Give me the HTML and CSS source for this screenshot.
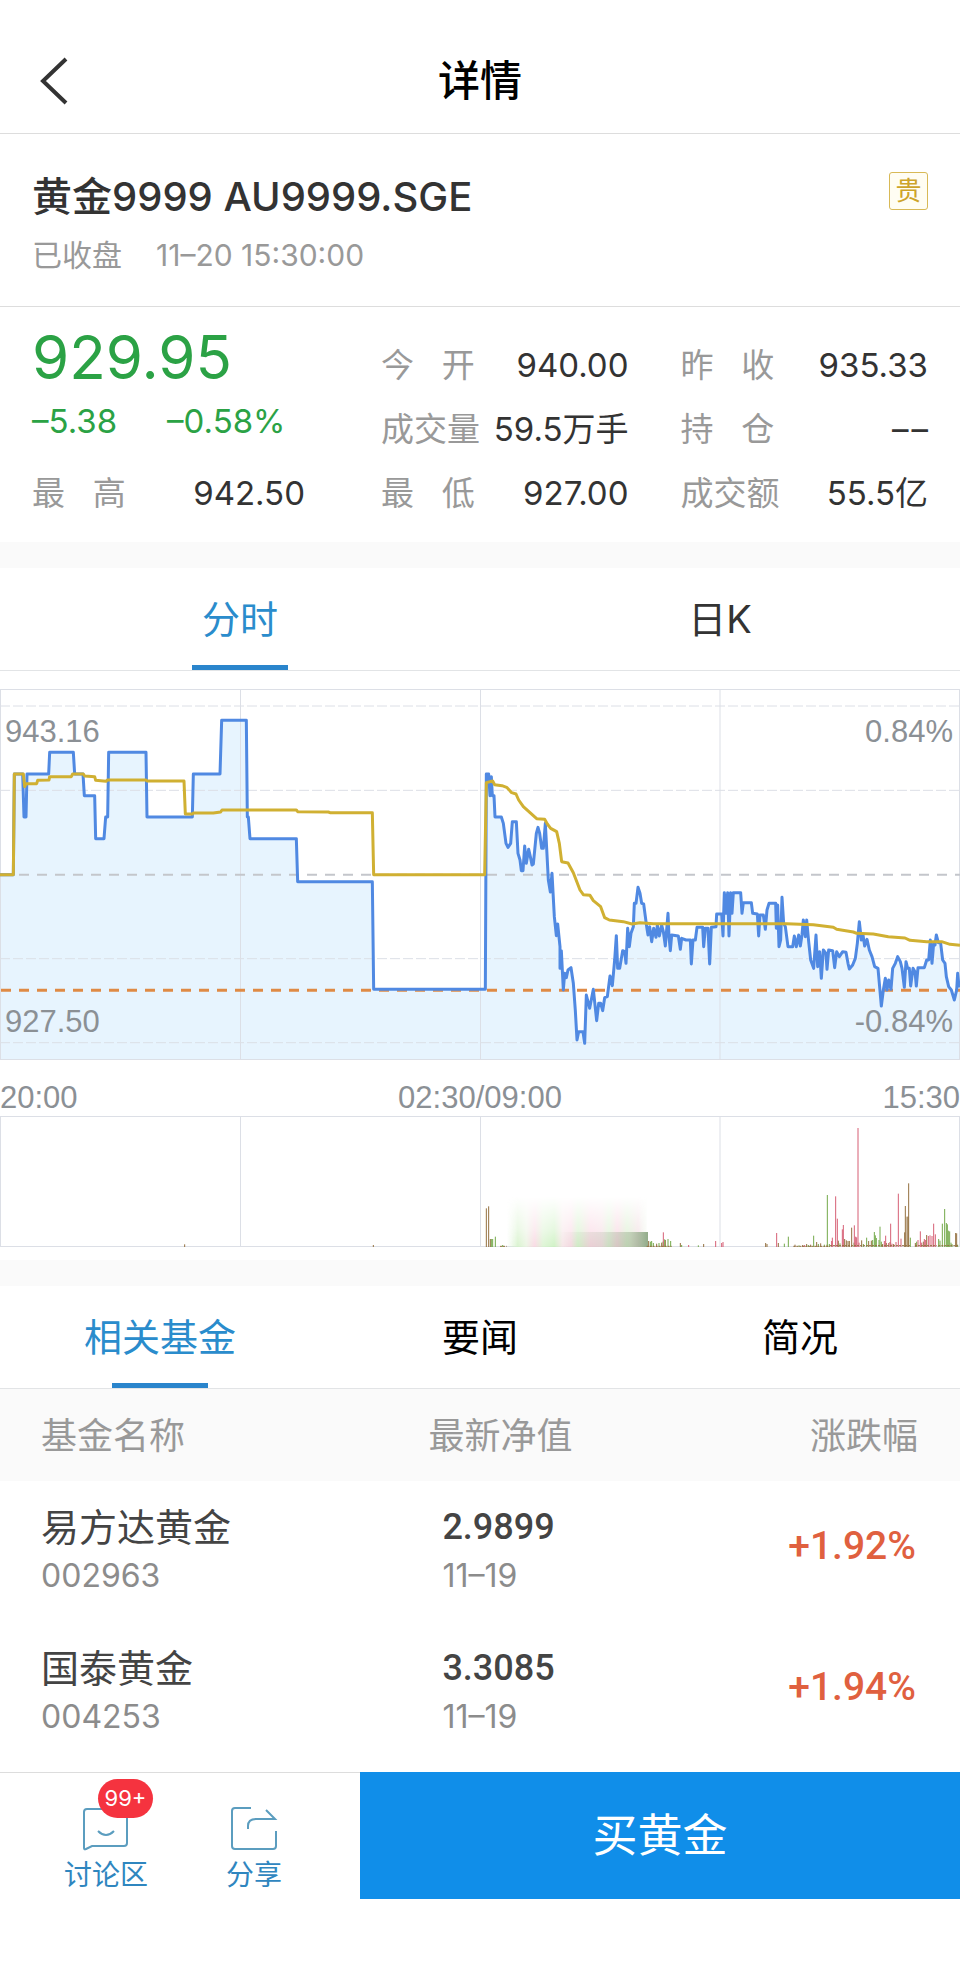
FILE: index.html
```html
<!DOCTYPE html>
<html lang="zh-CN">
<head>
    <meta charset="utf-8">
    <meta name="viewport" content="width=device-width, initial-scale=1">
    <title>详情</title>
    <link rel="stylesheet" href="styles.css">
</head>
<body>
    <header class="navbar">
        <button class="back" type="button" aria-label="返回">
            <svg width="28" height="48" viewBox="0 0 28 48"><path d="M26 2L3 24L26 46"/></svg>
        </button>
        <h1>详情</h1>
    </header>

    <section class="quote-head">
        <div>
            <h2>黄金9999 AU9999.SGE</h2>
            <p class="status"><span>已收盘</span><span>11–20 15:30:00</span></p>
        </div>
        <span class="tag">贵</span>
    </section>

    <section class="stats">
        <div class="col">
            <div class="price">929.95</div>
            <div class="change"><span>–5.38</span><span>–0.58%</span></div>
            <dl class="stat"><dt>最&nbsp;&nbsp;&nbsp;高</dt><dd>942.50</dd></dl>
        </div>
        <div class="col">
            <dl class="stat"><dt>今&nbsp;&nbsp;&nbsp;开</dt><dd>940.00</dd></dl>
            <dl class="stat"><dt>成交量</dt><dd>59.5万手</dd></dl>
            <dl class="stat"><dt>最&nbsp;&nbsp;&nbsp;低</dt><dd>927.00</dd></dl>
        </div>
        <div class="col">
            <dl class="stat"><dt>昨&nbsp;&nbsp;&nbsp;收</dt><dd>935.33</dd></dl>
            <dl class="stat"><dt>持&nbsp;&nbsp;&nbsp;仓</dt><dd>–&hairsp;–</dd></dl>
            <dl class="stat"><dt>成交额</dt><dd>55.5亿</dd></dl>
        </div>
    </section>

    <nav class="tabs chart-tabs">
        <button class="tab active" type="button">分时</button>
        <button class="tab" type="button">日K</button>
    </nav>

    <section class="chart">
        <div class="plot">
            <svg class="price-chart" viewBox="0 27 2880 1113" preserveAspectRatio="none">
                <!-- night session -->
                <path class="area" d="M0 1140V584H40L43 282H68L72 411H78L81 282H146L149 217H220L224 282H249L253 347H284L287 476H312L317 411H323L326 217H438L441 411H577L580 282H660L665 121H739L742 411H745L750 476H889L893 605H1117L1121 928H1440V1140Z"/>
                <!-- day session -->
                <path class="area" transform="translate(1440 0)" d="M0 1140V928H16L19 282 26 282 30 347 34 290 37 347 42 347 45 411 64 411 70 430 78 490 84 502 92 490 97 425 109 425 114 520 120 540 124 572 129 572 134 498 139 550 146 508 151 530 156 555 160 552 169 460 174 442 179 460 185 505 190 505 196 430 200 505 205 600 211 636 216 580 223 710 229 767 233 732 240 800 240 865 244 812 250 930 254 880 259 893 264 870 273 863 280 910 286 992 291 1080 296 1055 309 1055 314 1090 319 945 329 985 340 928 350 1022 356 970 362 970 368 992 374 953 382 950 390 888 397 917 404 840 409 767 413 865 419 865 428 812 434 815 438 850 443 745 448 800 453 760 460 740 463 670 468 670 474 622 480 640 485 670 491 672 500 740 504 765 509 740 515 785 521 745 528 772 532 735 538 768 545 735 550 755 556 798 564 700 567 770 571 812 575 765 595 768 601 808 605 775 618 780 631 780 634 852 639 780 646 780 651 742 668 742 671 800 676 745 684 745 689 852 694 742 708 740 710 702 725 702 729 768 733 638 738 700 743 638 747 768 752 638 756 700 760 638 782 638 786 700 790 668 814 668 818 700 832 702 836 768 840 705 850 705 856 748 861 690 867 670 887 670 889 745 893 675 897 800 902 780 906 652 911 730 916 740 924 800 938 800 943 768 949 800 956 765 961 798 966 765 970 720 976 770 980 720 986 785 992 840 1001 865 1008 765 1013 860 1019 815 1024 895 1030 810 1038 820 1041 868 1046 810 1058 812 1064 863 1070 815 1078 830 1088 815 1098 817 1104 850 1108 867 1118 855 1126 835 1132 790 1138 725 1144 780 1149 765 1154 798 1161 778 1168 810 1176 830 1184 860 1194 865 1198 910 1204 978 1210 930 1216 895 1221 930 1226 900 1233 928 1238 865 1246 850 1253 830 1261 845 1266 865 1273 922 1278 845 1283 865 1288 865 1292 918 1299 865 1305 875 1309 918 1314 863 1333 863 1340 840 1346 840 1351 780 1356 850 1361 790 1365 795 1369 765 1375 788 1382 790 1388 840 1395 850 1399 890 1406 920 1414 930 1423 960 1430 930 1433 880 1436 910 1440 922V1140Z"/>

                <path class="grid" d="M1.5 28V1138M721.5 28V1138M1441.5 28V1138M2160 28V1138M2878.5 28V1138M0 28.5H2880M0 1138.5H2880"/>
                <path class="grid dashed" d="M0 78H2880M0 331H2880M0 836H2880M0 1088H2880"/>
                <path class="prev-close" d="M3 584H2880"/>
                <path class="last" d="M3 931H2880"/>

                <path class="line" d="M0 584H40L43 282H68L72 411H78L81 282H146L149 217H220L224 282H249L253 347H284L287 476H312L317 411H323L326 217H438L441 411H577L580 282H660L665 121H739L742 411H745L750 476H889L893 605H1117L1121 928H1440"/>
                <path class="line" transform="translate(1440 0)" d="M0 928H16L19 282 26 282 30 347 34 290 37 347 42 347 45 411 64 411 70 430 78 490 84 502 92 490 97 425 109 425 114 520 120 540 124 572 129 572 134 498 139 550 146 508 151 530 156 555 160 552 169 460 174 442 179 460 185 505 190 505 196 430 200 505 205 600 211 636 216 580 223 710 229 767 233 732 240 800 240 865 244 812 250 930 254 880 259 893 264 870 273 863 280 910 286 992 291 1080 296 1055 309 1055 314 1090 319 945 329 985 340 928 350 1022 356 970 362 970 368 992 374 953 382 950 390 888 397 917 404 840 409 767 413 865 419 865 428 812 434 815 438 850 443 745 448 800 453 760 460 740 463 670 468 670 474 622 480 640 485 670 491 672 500 740 504 765 509 740 515 785 521 745 528 772 532 735 538 768 545 735 550 755 556 798 564 700 567 770 571 812 575 765 595 768 601 808 605 775 618 780 631 780 634 852 639 780 646 780 651 742 668 742 671 800 676 745 684 745 689 852 694 742 708 740 710 702 725 702 729 768 733 638 738 700 743 638 747 768 752 638 756 700 760 638 782 638 786 700 790 668 814 668 818 700 832 702 836 768 840 705 850 705 856 748 861 690 867 670 887 670 889 745 893 675 897 800 902 780 906 652 911 730 916 740 924 800 938 800 943 768 949 800 956 765 961 798 966 765 970 720 976 770 980 720 986 785 992 840 1001 865 1008 765 1013 860 1019 815 1024 895 1030 810 1038 820 1041 868 1046 810 1058 812 1064 863 1070 815 1078 830 1088 815 1098 817 1104 850 1108 867 1118 855 1126 835 1132 790 1138 725 1144 780 1149 765 1154 798 1161 778 1168 810 1176 830 1184 860 1194 865 1198 910 1204 978 1210 930 1216 895 1221 930 1226 900 1233 928 1238 865 1246 850 1253 830 1261 845 1266 865 1273 922 1278 845 1283 865 1288 865 1292 918 1299 865 1305 875 1309 918 1314 863 1333 863 1340 840 1346 840 1351 780 1356 850 1361 790 1365 795 1369 765 1375 788 1382 790 1388 840 1395 850 1399 890 1406 920 1414 930 1423 960 1430 930 1433 880 1436 910 1440 922"/>

                <!-- average price -->
                <path class="average" d="M0 584H40L43 282H70L74 320 78 311H110L113 301 147 300 149 290H214L218 282H250L254 288 284 290 287 301 318 304 322 300H438L441 303H552L556 402H577L581 399H640L662 396 666 390H889L893 395 985 396 990 398H1117L1121 584H1440"/>
                <path class="average" transform="translate(1440 0)" d="M0 584H14L19 308 38 303 44 314 66 317 80 322 95 338 108 342 116 360 130 380 150 398 170 416 194 418 202 432 212 445 230 455 238 490 245 545 264 549 280 578 300 630 310 644 330 646 340 662 362 680 374 713 388 720 430 725 456 732 480 728 520 731 920 731 1000 734 1060 742 1070 748 1120 756 1130 760 1180 762 1225 770 1275 774 1290 781 1340 785 1385 785 1410 793 1440 796"/>
            </svg>
            <span class="label top-left">943.16</span>
            <span class="label top-right">0.84%</span>
            <span class="label bottom-left">927.50</span>
            <span class="label bottom-right">-0.84%</span>
        </div>

        <div class="axis"><span>20:00</span><span>02:30/09:00</span><span>15:30</span></div>

        <svg class="volume-chart" viewBox="0 168 2880 393" preserveAspectRatio="none">
            <defs>
                <linearGradient id="haze" x1="0" x2="1" y1="0" y2="0">
                    <stop offset="0" stop-color="#dff3d6" stop-opacity="0"/>
                    <stop offset=".08" stop-color="#d4f2c8"/>
                    <stop offset=".14" stop-color="#e9f3e0"/>
                    <stop offset=".2" stop-color="#f8d5e0"/>
                    <stop offset=".26" stop-color="#d9f3cf"/>
                    <stop offset=".34" stop-color="#c9f0bd"/>
                    <stop offset=".4" stop-color="#f6e3e6"/>
                    <stop offset=".46" stop-color="#f9d6e2"/>
                    <stop offset=".51" stop-color="#cdf1c2"/>
                    <stop offset=".6" stop-color="#f9cfde"/>
                    <stop offset=".68" stop-color="#f3d9df"/>
                    <stop offset=".73" stop-color="#d4efca"/>
                    <stop offset=".79" stop-color="#f7cbda"/>
                    <stop offset=".86" stop-color="#d2ecc6"/>
                    <stop offset=".94" stop-color="#efd6dc"/>
                    <stop offset="1" stop-color="#e3f0dc" stop-opacity=".4"/>
                </linearGradient>
                <linearGradient id="haze-band" x1="0" x2="1" y1="0" y2="0">
                    <stop offset="0" stop-color="#8fae80" stop-opacity="0"/>
                    <stop offset=".5" stop-color="#a7ae9a" stop-opacity=".25"/>
                    <stop offset=".8" stop-color="#9ab08e" stop-opacity=".5"/>
                    <stop offset="1" stop-color="#86a27d" stop-opacity=".9"/>
                </linearGradient>
                <linearGradient id="fade" x1="0" x2="0" y1="0" y2="1">
                    <stop offset="0" stop-color="#000"/>
                    <stop offset=".65" stop-color="#777"/>
                    <stop offset="1" stop-color="#ddd"/>
                </linearGradient>
                <mask id="haze-mask"><rect x="1510" y="410" width="440" height="151" fill="url(#fade)"/></mask>
            </defs>
            <path class="grid" d="M1.5 169V559M721.5 169V559M1441.5 169V559M2160 169V559M2878.5 169V559M0 169.5H2880M0 559.5H2880"/>
            <rect x="1520" y="410" width="420" height="151" fill="url(#haze)" mask="url(#haze-mask)"/>
            <rect x="1680" y="516" width="264" height="45" fill="url(#haze-band)"/>
            <g transform="translate(1440 0)">
                <path class="bar brown" d="M-886 561V553M-320 561V555M19 561V445M26 561V439M31 561V537M506 561V543M530 561V551M545 561V548M556 561V540M601 561V549M671 561V552M857 561V549M861 561V552M945 561V554M968 561V555M980 561V552M992 561V554M1010 561V546M1022 561V550M1041 561V554M1075 561V542M1094 561V537M1099 561V541M1104 561V543M1108 561V543M1115 561V503M1145 561V541M1166 561V543M1174 561V542M1208 561V552M1219 561V549M1230 561V546M1241 561V552M1276 561V438M1274 561V517M1281 561V470M1284 561V470M1286 561V370M1306 561V549M1330 561V545M1340 561V525M1427 561V519M1430 561V520M895 561V549"/>
                <path class="bar green" d="M34 561V537M38 561V537M46 561V530M68 561V555M511 561V545M515 561V543M520 561V549M537 561V549M549 561V545M554 561V538M564 561V537M572 561V543M605 561V555M655 561V556M913 561V551M925 561V530M957 561V556M985 561V555M1001 561V527M1015 561V552M1033 561V554M1042 561V405M1048 561V552M1080 561V550M1122 561V548M1150 561V552M1160 561V533M1178 561V540M1183 561V516M1186 561V526M1189 561V534M1197 561V540M1200 561V500M1204 561V545M1291 561V533M1310 561V545M1376 561V537M1380 561V542M1387 561V491M1394 561V447M1399 561V489M1402 561V493M1405 561V512M1409 561V514M1413 561V548M1416 561V552M1433 561V554"/>
                <path class="bar red" d="M550 561V517M626 561V555M707 561V543M725 561V549M729 561V546M890 561V519M973 561V555M1055 561V543M1057 561V533M1067 561V409M1072 561V476M1087 561V508M1090 561V495M1123 561V496M1127 561V530M1130 561V532M1134 561V204M1137 561V548M1213 561V543M1217 561V527M1226 561V549M1232 561V491M1236 561V551M1248 561V546M1255 561V401M1263 561V536M1314 561V540M1321 561V514M1325 561V548M1333 561V537M1337 561V540M1345 561V528M1350 561V526M1356 561V528M1361 561V491M1366 561V523"/>
                <path class="bar brown floor" d="M60 559H80M500 559H575M940 559H1050M1050 557H1290M1305 557H1370M1375 557H1434"/>
            </g>
        </svg>
    </section>

    <nav class="tabs info-tabs">
        <button class="tab active" type="button">相关基金</button>
        <button class="tab" type="button">要闻</button>
        <button class="tab" type="button">简况</button>
    </nav>

    <table class="funds">
        <thead>
            <tr><th>基金名称</th><th>最新净值</th><th>涨跌幅</th></tr>
        </thead>
        <tbody>
            <tr>
                <td><div class="name">易方达黄金</div><div class="sub">002963</div></td>
                <td><div class="value">2.9899</div><div class="sub">11–19</div></td>
                <td class="rise">+1.92%</td>
            </tr>
            <tr>
                <td><div class="name">国泰黄金</div><div class="sub">004253</div></td>
                <td><div class="value">3.3085</div><div class="sub">11–19</div></td>
                <td class="rise">+1.94%</td>
            </tr>
        </tbody>
    </table>

    <footer class="toolbar">
        <div class="actions">
            <button class="action" type="button">
                <svg width="48" height="48" viewBox="0 0 48 48">
                    <path d="M5 4H42Q45 4 45 7V38Q45 41 42 41H10L4 44Q2 45 2 43V7Q2 4 5 4Z"/>
                    <path d="M16 26Q24 34 32 26"/>
                </svg>
                <span class="badge">99+</span>
                讨论区
            </button>
            <button class="action" type="button">
                <svg width="48" height="48" viewBox="0 0 48 48">
                    <path d="M21 3H5Q2 3 2 6V41Q2 44 5 44H43Q46 44 46 41V26"/>
                    <path d="M18 24V21Q18 14 26 14H45L36 5"/>
                </svg>
                分享
            </button>
        </div>
        <button class="buy" type="button">买黄金</button>
    </footer>
</body>
</html>
```
FILE: styles.css
```css
* {
    box-sizing: border-box;
}
body {
    margin: 0;
    padding-bottom: 80px;
    background: #fff;
    color: #333;
    font-family: Inter, "Noto Sans CJK SC", sans-serif;
}
h1, h2, p, dl, dd {
    margin: 0;
}
button {
    margin: 0;
    padding: 0;
    border: 0;
    background: none;
    color: inherit;
    font: inherit;
    cursor: pointer;
}
svg {
    display: block;
    fill: none;
}

/* top bar */
.navbar {
    display: grid;
    grid-template-columns: 80px 1fr 80px;
    align-items: center;
    height: 134px;
    padding-top: 28px;
    border-bottom: 1px solid #ddd;
}
.navbar h1 {
    color: #000;
    font-size: 42px;
    font-weight: 500;
    line-height: 60px;
    text-align: center;
}
.back {
    padding-left: 40px;
}
.back svg {
    stroke: #333;
    stroke-width: 4;
}

/* quote */
.quote-head {
    display: flex;
    justify-content: space-between;
    align-items: flex-start;
    padding: 38px 32px 31px;
    border-bottom: 1px solid #ddd;
}
.quote-head h2 {
    font-size: 40px;
    font-weight: 500;
    line-height: 50px;
}
.status {
    display: flex;
    gap: 34px;
    margin-top: 13px;
    color: #999;
    font-size: 30px;
    line-height: 40px;
}
.tag {
    width: 39px;
    border: 1px solid #d8b956;
    border-radius: 3px;
    background: #fffdf3;
    color: #cda42a;
    font-size: 26px;
    line-height: 36px;
    text-align: center;
}
.stats {
    display: grid;
    grid-template-columns: 6fr 5fr 5fr;
    align-items: end;
    gap: 52px;
    padding: 18px 32px 17px;
    font-size: 33px;
    line-height: 64px;
    white-space: nowrap;
}
.price,
.change {
    color: #2ba245;
}
.price {
    font-size: 60px;
}
.change {
    display: flex;
    gap: 50px;
    margin-bottom: 8px;
}
.stat {
    display: flex;
    justify-content: space-between;
}
.stat dt {
    color: #999;
}
.col:first-child .stat {
    padding-right: 24px;
}

/* tabs */
.tabs {
    display: flex;
    border-top: 26px solid #fafafa;
    border-bottom: 1px solid #e2e4e6;
}
.tab {
    position: relative;
    flex: 1;
    font-size: 38px;
    line-height: 102px;
}
.tab.active {
    color: #2a8ccc;
}
.tab.active::after {
    content: "";
    position: absolute;
    bottom: 0;
    left: 50%;
    width: 96px;
    height: 5px;
    margin-left: -48px;
    background: #2a85cc;
}
.info-tabs .tab {
    color: #000;
}
.info-tabs .active {
    color: #2a8ccc;
}

/* charts */
.chart {
    padding: 18px 0 13px;
    color: #8b9095;
    font-family: "Liberation Sans", Arial, sans-serif;
    font-size: 31px;
}
.plot {
    position: relative;
}
.price-chart {
    width: 100%;
    height: 371px;
}
.volume-chart {
    width: 100%;
    height: 131px;
}
.chart path {
    vector-effect: non-scaling-stroke;
}
.area {
    fill: #e7f4fe;
}
.grid {
    stroke: #dcdfe6;
}
.dashed {
    stroke-dasharray: 10 3;
}
.prev-close {
    stroke: #c4c6cb;
    stroke-width: 2;
    stroke-dasharray: 10 8;
}
.last {
    stroke: #df8a45;
    stroke-width: 3;
    stroke-dasharray: 10 8;
}
.line {
    stroke: #5089e2;
    stroke-width: 3;
    stroke-linejoin: round;
}
.average {
    stroke: #d0b032;
    stroke-width: 3;
    stroke-linejoin: round;
}
.bar {
    stroke-width: 1;
}
.brown {
    stroke: #94703f;
}
.green {
    stroke: #74a94a;
}
.red {
    stroke: #d65f75;
}
.floor {
    stroke-dasharray: 2 1;
}
.label {
    position: absolute;
    line-height: 34px;
}
.top-left {
    top: 26px;
    left: 5px;
}
.top-right {
    top: 26px;
    right: 7px;
}
.bottom-left {
    bottom: 21px;
    left: 5px;
}
.bottom-right {
    right: 7px;
    bottom: 21px;
}
.axis {
    display: flex;
    justify-content: space-between;
    padding-top: 20px;
    line-height: 36px;
}

/* related funds */
.funds {
    width: 100%;
    border-collapse: collapse;
    table-layout: fixed;
}
.funds th {
    height: 92px;
    padding: 0 6px 4px;
    background: #fafafa;
    color: #999;
    font-size: 36px;
    font-weight: 400;
    text-align: left;
}
.funds th:first-child {
    width: 44%;
}
.funds td {
    padding: 22px 20px 21px;
    vertical-align: top;
}
.funds th:first-child,
.funds td:first-child {
    padding-left: 41px;
}
.funds th:last-child,
.funds td:last-child {
    padding-right: 42px;
    text-align: right;
}
.funds td:last-child {
    padding-right: 44px;
}
.name {
    color: #444;
    font-size: 38px;
    line-height: 48px;
}
.value {
    color: #444;
    font-family: Roboto, sans-serif;
    font-size: 36px;
    font-weight: 500;
    line-height: 48px;
}
.sub {
    color: #8c8c8c;
    font-size: 32px;
    line-height: 50px;
}
.funds .rise {
    color: #e0603f;
    font-family: Roboto, sans-serif;
    font-size: 39px;
    font-weight: 500;
    line-height: 86px;
}

/* bottom bar */
.toolbar {
    display: flex;
    margin-top: 9px;
}
.actions {
    display: flex;
    width: 37.5%;
    padding-left: 32px;
    border-top: 1px solid #ddd;
}
.action {
    position: relative;
    width: 148px;
    padding-top: 30px;
    color: #2f86bf;
    font-size: 28px;
    line-height: 44px;
}
.action svg {
    margin: 0 auto;
    stroke: #5b9dbf;
    stroke-width: 2;
}
.badge {
    position: absolute;
    top: 6px;
    left: 66px;
    width: 55px;
    border-radius: 20px;
    background: #f5333f;
    color: #fff;
    font-size: 22px;
    line-height: 39px;
}
.buy {
    flex: 1;
    background: #108ee9;
    color: #fff;
    font-size: 45px;
    line-height: 127px;
}
```
